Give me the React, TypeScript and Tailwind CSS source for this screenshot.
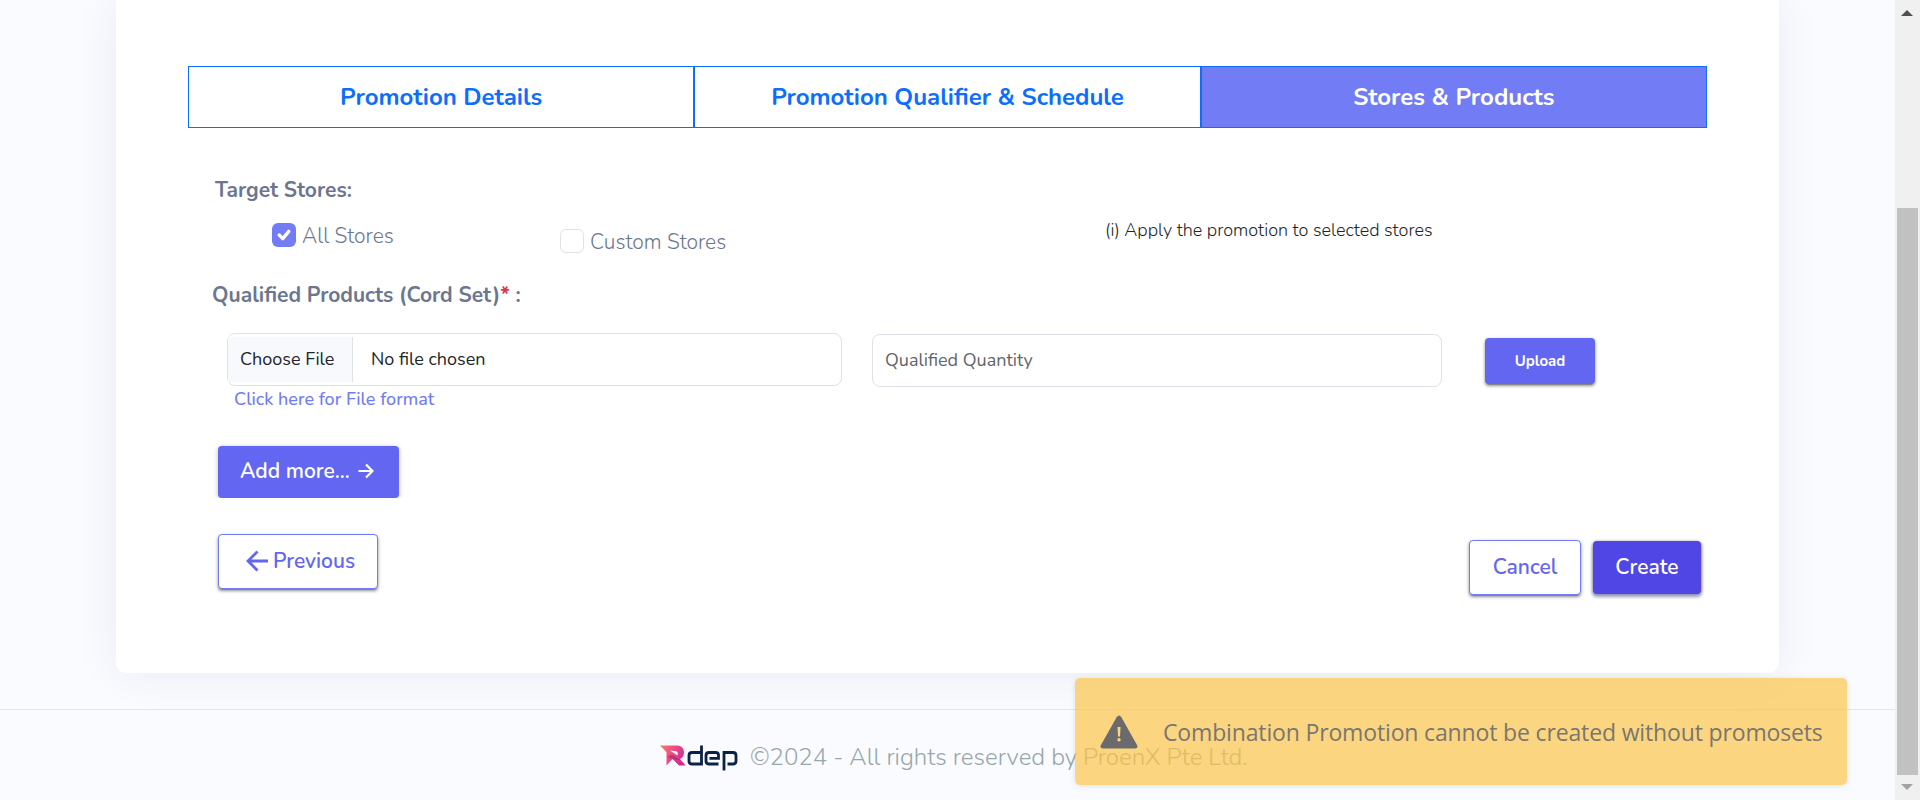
import type { ReactNode } from "react";

function T({ x = "", children }: { x?: string; children: ReactNode }) {
  return <span className={`block whitespace-nowrap leading-8 ${x}`}>{children}</span>;
}

function Logo() {
  return (
    <svg className="block h-[28px] w-[80px]" viewBox="0 0 80 28" fill="none">
      <defs>
        <linearGradient id="rg" x1="0" y1="0" x2="26" y2="16" gradientUnits="userSpaceOnUse">
          <stop offset="0" stopColor="#ff7a66" />
          <stop offset="0.45" stopColor="#ee4f82" />
          <stop offset="1" stopColor="#c9209f" />
        </linearGradient>
      </defs>
      <path d="M0 .5H17C21.500 .5 24 3.500 24 7.500C24 10.500 22.500 13 20 14L25.500 20.500H19L12.500 14L6.500 20.500V7Z" fill="url(#rg)" />
      <path d="M10 5.500L17 6.500Q18.500 8 17.500 10.500Z" fill="#fff" />
      <path d="M7 12L11.500 9.500L20 15L16 15Z" fill="#8d1f5c" fillOpacity="0.45" />
      <path d="M41.500 .5V19H32Q29 19 29 16V10.500Q29 7.500 32 7.500H41.500" stroke="#0c2148" strokeWidth="2.800" />
      <path d="M58.500 19H49Q46 19 46 16V10.500Q46 7.500 49 7.500H55.500Q58.500 7.500 58.500 10V13.300H49.500" stroke="#0c2148" strokeWidth="2.800" />
      <path d="M64 25.500V7.500H73Q76 7.500 76 10.500V16Q76 19 73 19H67.500" stroke="#0c2148" strokeWidth="2.800" />
    </svg>
  );
}

const raised =
  "shadow-[0_3px_1px_-2px_rgba(0,0,0,0.2),0_2px_3px_0_rgba(0,0,0,0.35),0_1px_5px_0_rgba(0,0,0,0.14)]";

export default function App() {
  return (
    <div className="relative flex h-[800px] w-[1920px] overflow-hidden bg-[#fafbff] font-['Nunito','Lato',sans-serif]">
      <div className="flex w-[1895px] flex-col">
        <main className="ml-[116px] h-[673px] w-[1663px] shrink-0 rounded-b-[10px] bg-white px-[72px] pt-[66px] shadow-[0_0_40px_rgba(50,50,93,0.08)]">
          <nav className="grid h-[62px] w-[1519px] grid-cols-3 text-center text-[24px] font-bold text-[#0d6efd]">
            <div className="border border-[#0d6efd] pt-[14px]"><T>Promotion Details</T></div>
            <div className="border border-[#0d6efd] pt-[14px]"><T>Promotion Qualifier &amp; Schedule</T></div>
            <div className="border border-[#0d6efd] bg-[#727cf5] pt-[14px] text-white"><T>Stores &amp; Products</T></div>
          </nav>

          <h3 className="mt-[46px] pl-[27px] text-[21px] font-bold text-[#6b7690]"><T>Target Stores:</T></h3>
          <div className="flex h-[73px] items-start text-[21px] font-light text-[#6b7690]">
            <label className="ml-[84px] flex w-[288px] pt-[14px]">
              <span className="mt-[3px] mr-[6px] flex size-6 items-center justify-center rounded-[6px] bg-[#727cf5]">
                <svg className="size-6" viewBox="0 0 20 20" fill="none">
                  <path d="M6 10l3 3 5-6" stroke="#fff" strokeWidth="2.800" strokeLinecap="round" strokeLinejoin="round" />
                </svg>
              </span>
              <T>All Stores</T>
            </label>
            <label className="flex w-[545px] pt-[20px]">
              <span className="mt-[3px] mr-[6px] size-6 rounded-[6px] border border-[#dee2e6]" />
              <T>Custom Stores</T>
            </label>
            <p className="pt-[8px] text-[18px] text-[#212529]"><T>(i) Apply the promotion to selected stores</T></p>
          </div>

          <h3 className="pl-[24px] text-[21px] font-bold text-[#6b7690]">
            <T>Qualified Products (Cord Set)<span className="text-[#dc3545]">*</span> :</T>
          </h3>
          <div className="mt-[22px] flex h-[53px] items-start pl-[39px] text-[18px]">
            <div className="flex h-[53px] w-[615px] items-center rounded-[8px] border border-[#dee2e6] text-[#212529]">
              <div className="flex h-[45px] w-[125px] items-center border-r border-[#dee2e6] bg-[#f8f9fc] pb-[2px] pl-[12px]"><T>Choose File</T></div>
              <T x="ml-[18px] pb-[2px]">No file chosen</T>
            </div>
            <div className="mt-px ml-[30px] flex h-[53px] w-[570px] items-center rounded-[8px] border border-[#dee2e6] pb-px pl-[12px] text-[#5f656b]">
              <T>Qualified Quantity</T>
            </div>
            <button className={`mt-[5px] ml-[43px] h-[46px] w-[110px] rounded-[4px] bg-[#6366f1] text-[15px] font-bold text-white ${raised}`}>
              <T>Upload</T>
            </button>
          </div>
          <a className="block pl-[46px] text-[18px] leading-[26px] font-medium text-[#727cf5]">Click here for File format</a>

          <button className="mt-[34px] ml-[30px] flex h-[52px] w-[181px] items-center rounded-[4px] bg-[#6366f1] pb-[2px] pl-[22px] text-[21px] font-semibold text-white shadow-[0_1px_5px_rgba(0,0,0,0.25)] [clip-path:inset(-6px_-6px_0_-6px)]">
            <T>Add more...</T>
            <svg className="ml-[8px] h-[16px] w-[16px]" viewBox="0 0 16 16" fill="none" stroke="#fff" strokeWidth="2.200">
              <path d="M.5 8H14M8 1.500L14.500 8L8 14.500" />
            </svg>
          </button>

          <div className="mt-[36px] flex items-start pl-[30px] text-[21px] font-semibold">
            <button className={`flex h-[55px] w-[160px] items-center rounded-[4px] border border-[#727cf5] bg-white pb-px pl-[27px] text-[#6366f1] ${raised}`}>
              <svg className="mr-[5px] h-[22px] w-[22px]" viewBox="0 0 22 22" fill="none" stroke="#6366f1" strokeWidth="2.800">
                <path d="M22 11H2.500M11.500 1.500L2 11L11.500 20.500" />
              </svg>
              <T>Previous</T>
            </button>
            <button className={`mt-[6px] ml-[1091px] h-[55px] w-[112px] rounded-[4px] border border-[#727cf5] bg-white pb-px text-[#6366f1] ${raised}`}>
              <T>Cancel</T>
            </button>
            <button className="mt-[7px] ml-[12px] h-[53px] w-[108px] rounded-[4px] bg-[#4f46e5] pb-px text-white shadow-[0_1px_3px_1px_rgba(40,40,90,0.4),0_3px_3px_1px_rgba(60,60,130,0.22)]">
              <T>Create</T>
            </button>
          </div>
        </main>

        <footer className="mt-[36px] flex h-[91px] items-start border-t border-[#e3e6eb] pl-[660px]">
          <div className="mt-[35px]"><Logo /></div>
          <p className="mt-[31px] ml-[10px] text-[24px] font-light text-[#98a6ad]"><T>©2024 - All rights reserved by ProenX Pte Ltd.</T></p>
        </footer>
      </div>

      <div className="flex w-[25px] flex-col items-center bg-[#f0f0f0]">
        <svg className="mt-[10px] mr-px h-[6px] w-[12px]" viewBox="0 0 12 6"><path d="M6 0L12 6H0Z" fill="#505050" /></svg>
        <div className="mt-[192px] mr-px h-[567px] w-[21px] bg-[#c1c1c1]" />
        <svg className="mt-[9px] mr-px h-[6px] w-[12px]" viewBox="0 0 12 6"><path d="M0 0H12L6 6Z" fill="#a3a3a3" /></svg>
      </div>

      <div className="absolute top-[678px] left-[1075px] flex h-[107px] w-[772px] items-center rounded-[5px] bg-[rgba(251,197,72,0.7)] pl-[25px] shadow-[0_1px_6px_rgba(0,0,0,0.1)]">
        <svg className="h-[34px] w-[38px] shrink-0" viewBox="0 0 38 34">
          <path d="M16.600 2.200Q19 -1.200 21.400 2.200L37.300 30.500Q38.200 33.500 35 33.500H3Q-.2 33.500 .7 30.500Z" fill="#6b6b6d" />
          <path d="M17.500 12H20.500L20 21.500H18Z" fill="#fbd57f" />
          <circle cx="19" cy="24.800" r="1.700" fill="#fbd57f" />
        </svg>
        <p className="ml-[25px] font-['Open_Sans',sans-serif] text-[23px] tracking-[-0.15px] text-[#7a7770]"><T>Combination Promotion cannot be created without promosets</T></p>
      </div>
    </div>
  );
}
